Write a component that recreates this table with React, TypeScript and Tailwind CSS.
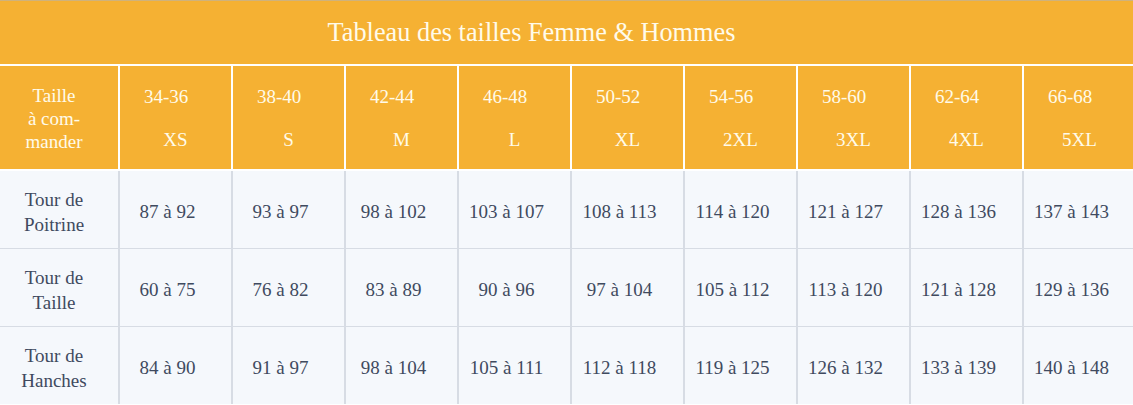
const sizes = [
  ["34-36", "XS"],
  ["38-40", "S"],
  ["42-44", "M"],
  ["46-48", "L"],
  ["50-52", "XL"],
  ["54-56", "2XL"],
  ["58-60", "3XL"],
  ["62-64", "4XL"],
  ["66-68", "5XL"],
]

const rows = [
  {
    label: ["Tour de", "Poitrine"],
    values: ["87 à 92", "93 à 97", "98 à 102", "103 à 107", "108 à 113", "114 à 120", "121 à 127", "128 à 136", "137 à 143"],
  },
  {
    label: ["Tour de", "Taille"],
    values: ["60 à 75", "76 à 82", "83 à 89", "90 à 96", "97 à 104", "105 à 112", "113 à 120", "121 à 128", "129 à 136"],
  },
  {
    label: ["Tour de", "Hanches"],
    values: ["84 à 90", "91 à 97", "98 à 104", "105 à 111", "112 à 118", "119 à 125", "126 à 132", "133 à 139", "140 à 148"],
  },
]

export default function App() {
  return (
    <div className="w-[1133px] overflow-hidden bg-white font-['Liberation_Serif',serif]">
      <div className="flex h-[64px] items-center justify-center border-t border-[#cfb27c] bg-[#f5b133] pr-[70px] text-[26.3px] text-[#fffbea]">
        Tableau des tailles Femme &amp; Hommes
      </div>

      <div className="mt-[2px] grid w-[1135px] grid-cols-[118px_repeat(9,111px)] gap-x-[2px] bg-white">
        <div className="flex h-[103px] flex-col items-center justify-center bg-[#f5b133] pt-[2px] pr-[10px] text-center text-[19px] leading-[23px] text-[#fffbea]">
          <span>Taille</span>
          <span>à com-</span>
          <span>mander</span>
        </div>
        {sizes.map(([range, size]) => (
          <div key={range} className="flex h-[103px] flex-col justify-center bg-[#f5b133] pt-[2px] text-[19px] leading-[22px] text-[#fffbea]">
            <span className="pl-6">{range}</span>
            <span className="mt-[21px] text-center">{size}</span>
          </div>
        ))}
      </div>

      <div className="mt-[2px] grid w-[1135px] grid-cols-[118px_repeat(9,111px)] gap-x-[2px] gap-y-px bg-[#d7dce4]">
        {rows.map((row) => (
          <>
            <div key={row.label[1]} className="flex h-[77px] flex-col items-center justify-center bg-[#f5f8fc] pt-[5px] pr-[10px] text-center text-[19px] leading-[25px] text-[#3f4a5f]">
              <span>{row.label[0]}</span>
              <span>{row.label[1]}</span>
            </div>
            {row.values.map((v, i) => (
              <div key={row.label[1] + i} className="flex h-[77px] items-center justify-center bg-[#f5f8fc] pt-[6px] pr-4 text-[19px] text-[#3f4a5f]">
                {v}
              </div>
            ))}
          </>
        ))}
      </div>
    </div>
  )
}
